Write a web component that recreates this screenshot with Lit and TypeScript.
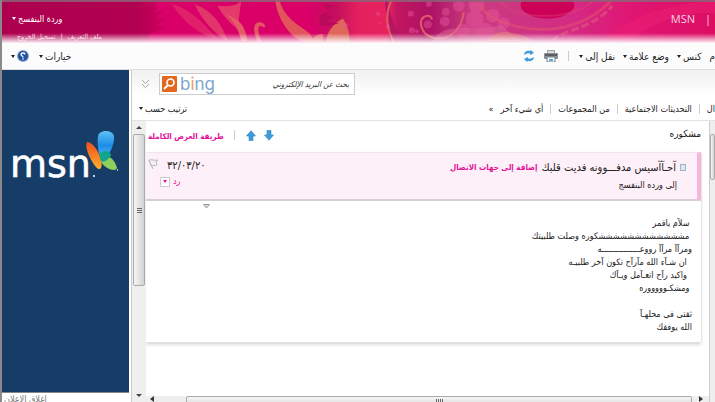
import { LitElement, html, css, svg } from "lit";
import { customElement } from "lit/decorators.js";

const DOTS = [
  [410, 14, 3], [416, 32, 2], [427, 25, 4], [411, 31, 3], [445, 12, 4], [428, 4, 3], [444, 22, 5],
  [458, 6, 6], [462, 31, 7], [474, 20, 9], [484, 32, 9], [492, 16, 7], [476, 5, 8], [503, 24, 6], [345, 26, 2], [377, 14, 2],
  [387, 27, 2], [379, 24, 1],
];

const banner = svg`
  <defs>
    <linearGradient id="base" x1="0" x2="1" y1="0" y2="0">
      <stop offset="0" stop-color="#ad004e" /><stop offset=".19" stop-color="#b20052" />
      <stop offset=".24" stop-color="#d80066" /><stop offset=".43" stop-color="#da0068" />
      <stop offset=".47" stop-color="#c5105f" /><stop offset=".5" stop-color="#e5205e" />
      <stop offset=".54" stop-color="#e6225f" /><stop offset=".555" stop-color="#c21562" />
      <stop offset=".6" stop-color="#ad1264" /><stop offset=".66" stop-color="#c93c80" />
      <stop offset=".8" stop-color="#d42a84" /><stop offset=".88" stop-color="#e01673" />
      <stop offset="1" stop-color="#dc0d63" />
    </linearGradient>
    <linearGradient id="fade" x1="0" x2="0" y1="0" y2="1">
      <stop offset="0" stop-color="#fff" stop-opacity="0" />
      <stop offset="1" stop-color="#fff" stop-opacity=".95" />
    </linearGradient>
  </defs>
  <rect width="715" height="44" fill="url(#base)" />
  <path d="M153 0 Q158 8 152 13 L162 10 L154 19 L166 18 L156 26 L170 27 L150 34 L143 44 L200 44 L230 0Z" fill="#d90067" />
  <path d="M170 4 Q190 8 216 40 Q190 34 170 4Z" fill="#e0206a" />
  <path d="M193 4 Q218 14 226 42 Q204 28 193 4Z" fill="#e2356a" />
  <path d="M216 6 Q236 8 240 0 L236 30 Q222 18 216 6Z" fill="#e23a6a" />
  <path d="M225 15 Q236 24 240 42 L246 42 Q244 20 225 15Z" fill="#e45a66" />
  <path d="M256 42 C250 28 253 22 260 23 C266 25 264 30 261 27 C256 24 256 32 260 42Z" fill="#e25561" />
  <path d="M274 0 C276 20 290 40 304 43 L312 43 C312 28 286 28 278 0Z" fill="#e2545c" />
  <path d="M309 43 Q314 34 322 35 L322 43Z" fill="#e2545c" />
  <path d="M325 43 Q326 28 342 19 Q350 32 348 43Z" fill="#e0655a" />
  <path d="M318 16 l14 -6 -8 7 10 0 -10 5 14 2 -18 3z M322 4 l12 2 -8 4z" fill="#b80a58" />
  <path d="M387 0 C389 20 398 36 404 43 L388 43 C390 30 384 14 384 0Z" fill="#b51663" />
  <path d="M391 0 C382 16 388 34 393 43" fill="none" stroke="#e25a62" stroke-width="2" />
  <path d="M431 20 C431 14 420 15 420 24 C421 36 432 42 446 38 C456 34 462 24 463 12" fill="none" stroke="#dd5b68" stroke-width="2" />
  <path d="M432 42 C445 20 470 34 500 26 L520 42Z" fill="#dd6c9c" opacity=".45" />
  <g fill="#e9579f" opacity=".45">${DOTS.map(([x, y, r]) => svg`<circle cx=${x} cy=${y} r=${r} />`)}</g>
  <ellipse cx="547" cy="5" rx="27" ry="14" fill="#cd0058" />
  <path d="M478 4 C490 26 540 38 576 24 C594 18 606 6 612 0" fill="none" stroke="#e2566e" stroke-width="3" opacity=".5" />
  <path d="M500 2 C516 20 566 22 592 2" fill="none" stroke="#de4577" stroke-width="2" opacity=".4" />
  <path d="M486 42 C496 26 520 34 534 42Z" fill="#e2777a" opacity=".6" />
  <path d="M552 42 C560 30 590 32 612 6" fill="none" stroke="#e4647a" stroke-width="3" opacity=".5" stroke-dasharray="8 3" />
  <path d="M600 42 C620 26 650 6 715 0 L715 14 C680 10 650 26 630 42Z" fill="#ee1f74" opacity=".5" />
  <rect y="34" width="715" height="10" fill="url(#fade)" />
  <rect width="715" height="2" fill="#8c6478" opacity=".85" />
`;

@customElement("app-root")
export class AppRoot extends LitElement {
  static styles = css`
    :host {
      display: flex;
      flex-direction: column;
      box-sizing: border-box;
      height: 100vh;
      overflow: hidden;
      direction: rtl;
      border-left: 2px solid #8a8a8a;
      background: #fff;
      color: #222;
      font: 9px/13px "DejaVu Sans Condensed", "DejaVu Sans", sans-serif;
    }
    button, input { font: inherit; color: inherit; background: none; border: 0; padding: 0; margin: 0; }
    button { white-space: nowrap; cursor: pointer; }
    a { color: inherit; text-decoration: none; white-space: nowrap; }
    svg { display: block; flex: none; }
    .caret::after { content: ""; display: inline-block; margin-right: 2px; vertical-align: 2px; border: 2px solid transparent; border-top: 3px solid currentColor; border-bottom: 0; }

    header { position: relative; display: flex; justify-content: space-between; flex: none; height: 43px; color: #fff; }
    .banner { position: absolute; inset: 0; width: 100%; height: 100%; }
    .brand { position: relative; display: flex; gap: 10px; padding: 12px 4px 0 0; font: 11px/14px "Open Sans", sans-serif; color: #fbd3e3; }
    .user { position: relative; display: flex; flex-direction: column; align-items: flex-end; gap: 6px; padding: 12px 0 0 10px; }
    .name { line-height: 14px; }
    .account { display: flex; gap: 5px; padding-left: 5px; font-size: 7px; line-height: 10px; color: #fbe0ec; }

    .toolbar { display: flex; align-items: center; flex: none; height: 26px; padding-left: 9px; border-bottom: 1px solid #ddd; background: #fcfcfc; font-size: 10px; }
    .actions { display: flex; align-items: center; gap: 10px; flex: 1; }
    .menus { display: flex; gap: 8px; }
    .rule { width: 1px; height: 10px; background: #ccc; }
    .options { display: flex; align-items: center; gap: 10px; }
    .help { display: flex; align-items: center; }

    .body { display: flex; flex: 1; min-height: 0; }
    .mail { display: flex; flex-direction: column; flex: 1; min-width: 0; margin-left: 2px; border-left: 1px solid #ccc; background: linear-gradient(#f1f1f1, #fff 26px); }
    .side { width: 127px; flex: none; display: flex; flex-direction: column; }
    .ad { display: flex; flex: 1; background: #153d68; border-bottom: 1px solid #888; padding: 56px 8px 0; }
    .close-ad { height: 9px; text-align: left; padding-left: 2px; color: #777; }

    .search-row { display: flex; align-items: center; justify-content: flex-end; gap: 9px; height: 28px; flex: none; padding-left: 9px; }
    .search { display: flex; align-items: center; box-sizing: border-box; width: 196px; height: 22px; padding: 0 5px 0 2px; border: 1px solid #ccc; background: #fff; }
    .search input { flex: 1; min-width: 0; font-size: 8px; font-style: italic; outline: 0; }
    .search input::placeholder { color: #333; opacity: 1; }
    .bing { font: 17px/18px "Inter", sans-serif; color: #7ea6cf; margin-left: 3px; }
    .bing i { font-style: normal; color: #eaa55c; }

    .filters { display: flex; align-items: center; flex: none; height: 22px; gap: 7px; padding-left: 7px; border-bottom: 1px solid #dfe3e6; }
    .sort { margin-right: auto; }

    .panes { display: flex; flex: 1; min-height: 0; }
    .edge { width: 6px; flex: none; border-left: 1px solid #ccc; background: #eee; padding-top: 13px; box-sizing: border-box; }
    .edge .thumb { height: 46px; }
    .vbar { width: 14px; flex: none; display: flex; flex-direction: column; align-items: center; background: #efefef; box-sizing: border-box; padding: 5px 1px; direction: ltr; }
    .thumb { box-sizing: border-box; border: 1px solid #aaa; border-radius: 2px; background: linear-gradient(90deg, #f6f6f6, #d2d2d4); display: flex; align-items: center; justify-content: center; }
    .vbar .thumb { width: 100%; height: 152px; margin-top: 5px; }
    .grip { width: 5px; height: 5px; background: repeating-linear-gradient(#666 0 1px, transparent 1px 2px); }
    .grip.h { width: 7px; height: 4px; background: repeating-linear-gradient(90deg, #666 0 1px, transparent 1px 2px); }
    .up, .down { border: 3px solid transparent; }
    .up { border-bottom: 3px solid #444; border-top: 0; }
    .down { border-top: 3px solid #444; border-bottom: 0; margin-top: auto; }
    .hbar { display: flex; align-items: center; height: 6px; flex: none; overflow: hidden; background: #eee; direction: ltr; padding: 0 6px 0 4px; gap: 3px; }
    .hbar .thumb { flex: 1; height: 12px; margin: 0 4px 0 29px; align-self: flex-start; align-items: flex-start; padding-top: 2px; background: linear-gradient(#f6f6f6, #dcdcdc 8px); }
    .arrow { width: 0; height: 0; border: 3px solid transparent; }
    .arrow.l { border-right: 4px solid #333; border-left: 0; }
    .arrow.r { border-left: 4px solid #333; border-right: 0; }

    .reading { display: flex; flex-direction: column; flex: 1; min-width: 0; }
    .scroll { flex: 1; overflow: hidden; padding-right: 8px; min-height: 0; }
    .subject { display: flex; align-items: center; height: 31px; }
    .subject h1 { flex: 1; margin: 0; font-size: 10px; line-height: 14px; font-weight: 400; padding-bottom: 5px; }
    .nav { display: flex; align-items: center; gap: 8px; margin-left: 10px; padding-bottom: 3px; }
    .nav .rule { margin-right: 3px; }
    .pink { color: #e3109a; font-weight: 700; font-size: 8px; }
    .view { margin-left: 2px; }
    .card { background: #fff; box-shadow: 0 3px 3px #ddd, 1px 0 1px #eee; }
    .from { display: flex; justify-content: space-between; height: 49px; box-sizing: border-box; border-right: 4px solid #f5b6dc; border-top: 1px solid #f1e4ec; border-bottom: 2px solid #d6ced3; background: #fef0f8; padding: 6px 11px 0 2px; }
    .sender { font-size: 11px; line-height: 17px; white-space: nowrap; display: flex; align-items: center; gap: 4px; }
    .presence { width: 4px; height: 5px; border: 1px solid #9fb3c8; background: #dbe9f5; }
    .to { line-height: 15px; padding-right: 9px; margin-top: 2px; }
    .meta { display: flex; gap: 7px; direction: ltr; }
    .date { font-size: 11px; line-height: 13px; }
    .reply { display: flex; align-items: center; gap: 3px; margin: 3px 0 0 -7px; color: #e3109a; }
    .drop { width: 10px; height: 10px; border: 1px solid #ccc; background: #fff; display: flex; align-items: center; justify-content: center; }
    .drop::after { content: ""; border: 2px solid transparent; border-top: 3px solid #e3109a; border-bottom: 0; }
    .pull { display: flex; direction: ltr; padding: 3px 0 0 57px; height: 13px; box-sizing: border-box; }
    .text { margin: 0; padding: 3px 9px 8px; white-space: pre; font: inherit; }
  `;

  render() {
    return html`
      <header>
        <svg class="banner" viewBox="0 0 715 44" preserveAspectRatio="none" aria-hidden="true">${banner}</svg>
        <nav class="brand"><span>|</span><a href="#msn">MSN</a></nav>
        <div class="user">
          <button class="name caret">وردة البنفسج</button>
          <div class="account"><a href="#profile">ملف التعريف</a><span>|</span><a href="#logout">تسجيل الخروج</a></div>
        </div>
      </header>

      <div class="toolbar">
        <div class="actions">
          <div class="menus">
            <button>م</button>
            <button class="caret">كنس</button>
            <button class="caret">وضع علامة</button>
            <button class="caret">نقل إلى</button>
          </div>
          <span class="rule"></span>
          <button aria-label="طباعة">
            <svg width="14" height="12" viewBox="0 0 14 12">
              <path d="M3 0h8v4H3z" fill="#9aa1a8" /><path d="M4 1h6v3H4z" fill="#d9dde0" />
              <rect y="3" width="14" height="6" rx="1" fill="#8d9196" /><path d="M1 4h12v2H1z" fill="#5a5e63" />
              <path d="M3 7h8v5H3z" fill="#fff" stroke="#6b7e92" /><path d="M5 9h4v2H5z" fill="#6ba3cf" />
            </svg>
          </button>
          <button aria-label="تحديث">
            <svg width="10" height="12" viewBox="0 0 10 12" fill="#3f9bd8">
              <path d="M0 5C0 2 3 0 6 1.200L7 0l3 3-4 2V3.400C4 3 2 3.600 0 5z" />
              <path d="M10 7c0 3-3 5-6 3.800L3 12 0 9l4-2v1.600C6 9 8 8.400 10 7z" />
            </svg>
          </button>
        </div>
        <div class="options">
          <button class="caret">خيارات</button>
          <button class="help caret" aria-label="تعليمات">
            <svg width="12" height="12" viewBox="0 0 12 12">
              <circle cx="6" cy="6" r="6" fill="#8fa9cf" /><circle cx="6" cy="6" r="5" fill="#2450a0" />
              <path d="M8 4.600C8 2.500 4 2.500 4 4.400C4 6 6 5.600 6 7.400" fill="none" stroke="#fff" stroke-width="1.300" />
              <circle cx="6" cy="9" r=".8" fill="#fff" />
            </svg>
          </button>
        </div>
      </div>

      <div class="body">
        <main class="mail">
          <div class="search-row">
            <label class="search">
              <input type="search" aria-label="بحث" placeholder="بحث عن البريد الإلكتروني" />
              <span class="bing" dir="ltr">b<i>i</i>ng</span>
              <svg width="15" height="16" viewBox="0 0 15 16">
                <rect width="15" height="16" rx="1" fill="#e3681d" />
                <circle cx="8.500" cy="6.500" r="3.500" fill="none" stroke="#fff" stroke-width="1.700" />
                <path d="M6 9l-4 4" stroke="#fff" stroke-width="2" />
              </svg>
            </label>
            <svg width="9" height="9" viewBox="0 0 9 9" fill="none" stroke="#aaa"><path d="M1 0l3.500 3.500L8 0M1 4l3.500 3.500L8 4" /></svg>
          </div>

          <div class="filters">
            <button>ال</button><span class="rule"></span>
            <button>التحديثات الاجتماعية</button><span class="rule"></span>
            <button>من المجموعات</button><span class="rule"></span>
            <button>أي شيء آخر</button><span>»</span>
            <button class="sort caret">ترتيب حسب</button>
          </div>

          <div class="panes">
            <div class="edge"><div class="thumb"></div></div>
            <section class="reading">
              <div class="scroll">
                <div class="subject">
                  <h1>مشكوره</h1>
                  <div class="nav">
                    <button aria-label="التالي">
                      <svg width="10" height="11" viewBox="0 0 10 11"><path d="M3 .5h4V5h2.500L5 10.300.5 5H3z" fill="#3d9ddb" stroke="#2b7fbd" stroke-width=".6" /></svg>
                    </button>
                    <button aria-label="السابق">
                      <svg width="10" height="11" viewBox="0 0 10 11"><path d="M3 10.500h4V6h2.500L5 .7.5 6H3z" fill="#3d9ddb" stroke="#2b7fbd" stroke-width=".6" /></svg>
                    </button>
                    <span class="rule"></span>
                  </div>
                  <a class="pink view" href="#full">طريقة العرض الكاملة</a>
                </div>
                <article class="card">
                  <div class="from">
                    <div>
                      <div class="sender">
                        <span class="presence"></span><span>آحـآآسيس مدفـــوونه فديت قلبك</span>
                        <a class="pink" href="#add">إضافة إلى جهات الاتصال</a>
                      </div>
                      <div class="to">إلى ورده البنفسج</div>
                    </div>
                    <div class="meta">
                      <svg width="12" height="11" viewBox="0 0 12 11" fill="#f6f0f4" stroke="#bbb"><path d="M1 1l4 9M1 1c3-1 5 1 9 0L8 3l1 3c-2 1-4 0-6 1z" /></svg>
                      <div>
                        <div class="date">٣٢/٠٣/٢٠</div>
                        <div class="reply"><button class="drop" aria-label="خيارات الرد"></button><button>رد</button></div>
                      </div>
                    </div>
                  </div>
                  <div class="pull"><svg width="7" height="5" viewBox="0 0 7 5" fill="#ddd" stroke="#999"><path d="M.5.5h6L3.500 4z" /></svg></div>
                  <p class="text"> سلآم ياقمر
 مششششششششششششكوره وصلت طلبيتك
ومرآآ مرآآ رووعــــــــــــــــه
  ان شـآء الله مآرآح تكون آخر طلبيـه
  واكيد رآح اتعـآمل ويـآك
 ومشكـوووووره

ثقتى فى محلهـآ
الله يوفقك</p>
                </article>
              </div>
              <div class="hbar"><span class="arrow l"></span><div class="thumb"><span class="grip h"></span></div><span class="arrow r"></span></div>
            </section>
            <div class="vbar"><span class="up"></span><div class="thumb"><span class="grip"></span></div><span class="down"></span></div>
          </div>
        </main>

        <aside class="side">
          <a class="ad" href="#msn-home" aria-label="msn">
            <svg width="111" height="60" viewBox="10 126 111 60" direction="ltr">
              <defs>
                <linearGradient id="blue" x1="0" x2="0" y1="0" y2="1"><stop offset="0" stop-color="#5fc0f5" /><stop offset=".5" stop-color="#1d8ce8" /><stop offset="1" stop-color="#5cc4ee" /></linearGradient>
                <linearGradient id="fire" x1="0" x2="0" y1="0" y2="1"><stop offset="0" stop-color="#f04e20" /><stop offset="1" stop-color="#fbb02c" /></linearGradient>
              </defs>
              <text x="10" y="177" font-family="DejaVu Sans" font-size="38" fill="#fff" stroke="#fff" stroke-width=".6" style="direction:ltr">msn</text>
              <circle cx="94" cy="176" r="1" fill="#fff" />
              <path d="M87 142C91 141 99 150 101 160C103 168 100 171 97 168C92 163 84 148 87 142Z" fill="url(#fire)" />
              <path d="M98 136C99 130 112 129 114 136C115 144 109 156 103 160C98 156 97 144 98 136Z" fill="url(#blue)" />
              <path d="M101 158C108 153 115 160 117 168C116 172 106 170 101 162Z" fill="#8ed05c" />
              <path d="M99 154C104 149 110 151 111 155C109 160 103 163 101 161Z" fill="#12a48c" />
              <circle cx="117.500" cy="170" r=".7" fill="#fff" />
            </svg>
          </a>
          <div class="close-ad">إغلاق الإعلان</div>
        </aside>
      </div>
    `;
  }
}
